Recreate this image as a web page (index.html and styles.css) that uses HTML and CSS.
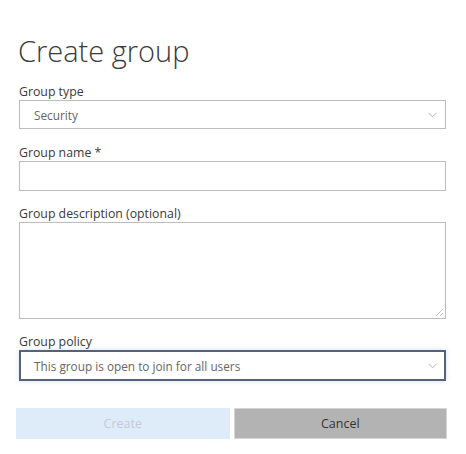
FILE: index.html
```html
<!DOCTYPE html>
<html lang="en">
<head>
<meta charset="utf-8">
<title>Create group</title>
<link rel="stylesheet" href="styles.css">
</head>
<body>
<main class="panel">
  <h1 class="title">Create group</h1>

  <div class="field field-first">
    <label class="label">Group type</label>
    <div class="select">
      <span class="select-text">Security</span>
      <svg class="chev" width="9" height="6" viewBox="0 0 9 6"><path d="M0.5 0.8 L4.5 4.8 L8.5 0.8" fill="none" stroke="#b0b0b0" stroke-width="1"/></svg>
    </div>
  </div>

  <div class="field">
    <label class="label">Group name *</label>
    <div class="input"></div>
  </div>

  <div class="field field-tight">
    <label class="label">Group description (optional)</label>
    <div class="textarea-wrap">
      <textarea class="textarea"></textarea>
      <svg class="grip" width="9" height="9" viewBox="0 0 9 9"><path d="M8 1 L1 8 M8 5 L5 8" fill="none" stroke="#c4c4c4" stroke-width="1"/></svg>
    </div>
  </div>

  <div class="field field-tight">
    <label class="label">Group policy</label>
    <div class="select select-focus">
      <span class="select-text">This group is open to join for all users</span>
      <svg class="chev" width="9" height="6" viewBox="0 0 9 6"><path d="M0.5 0.8 L4.5 4.8 L8.5 0.8" fill="none" stroke="#b0b0b0" stroke-width="1"/></svg>
    </div>
  </div>

  <div class="actions">
    <button class="btn btn-create" disabled>Create</button>
    <button class="btn btn-cancel">Cancel</button>
  </div>
</main>
</body>
</html>
```

FILE: styles.css
```css
html, body {
  margin: 0;
  padding: 0;
  background: #ffffff;
}

body {
  font-family: "Open Sans", "Noto Sans", "Liberation Sans", sans-serif;
  color: #333333;
}

.panel {
  padding: 32px 20px 0 19px;
  display: flex;
  flex-direction: column;
}

.title {
  margin: 0 0 0 -1px;
  font-weight: 300;
  font-size: 29px;
  line-height: 38px;
  color: #3a3a3a;
}

.field {
  display: flex;
  flex-direction: column;
  margin-top: 16px;
}

.field-first {
  margin-top: 14px;
}

.field-tight {
  margin-top: 15px;
}

.label {
  font-size: 12.3px;
  line-height: 16px;
  color: #3a3a3a;
}

.select {
  box-sizing: border-box;
  height: 29px;
  border: 1px solid #bdbdbd;
  display: flex;
  align-items: center;
  justify-content: space-between;
  padding: 0 8px 0 14px;
  background: #fff;
}

.select-text {
  font-size: 11.8px;
  color: #666666;
}

.select-focus {
  height: 31px;
  border: 2px solid #55627a;
  padding-left: 13px;
  padding-right: 7px;
  box-shadow: 0 0 5px rgba(120, 160, 220, 0.35);
}

.chev {
  display: block;
}

.input {
  box-sizing: border-box;
  height: 30px;
  border: 1px solid #bdbdbd;
}

.textarea-wrap {
  position: relative;
}

.textarea {
  box-sizing: border-box;
  width: 100%;
  height: 97px;
  border: 1px solid #bdbdbd;
  border-radius: 0;
  margin: 0;
  padding: 4px;
  font-family: inherit;
  resize: none;
  outline: none;
  display: block;
}

.grip {
  position: absolute;
  right: 2px;
  bottom: 2px;
  display: block;
}

.actions {
  display: grid;
  grid-template-columns: 1fr 1fr;
  gap: 4px;
  margin-top: 27px;
  margin-left: -3px;
  margin-right: -1px;
}

.btn {
  height: 31px;
  font-family: inherit;
  font-size: 12.5px;
  border: 1px solid transparent;
  padding: 0;
}

.btn-create {
  background: #deebf8;
  color: #c3ccd6;
}

.btn-cancel {
  background: #b3b3b3;
  border-color: #d6d6d6;
  color: #333333;
}
```
